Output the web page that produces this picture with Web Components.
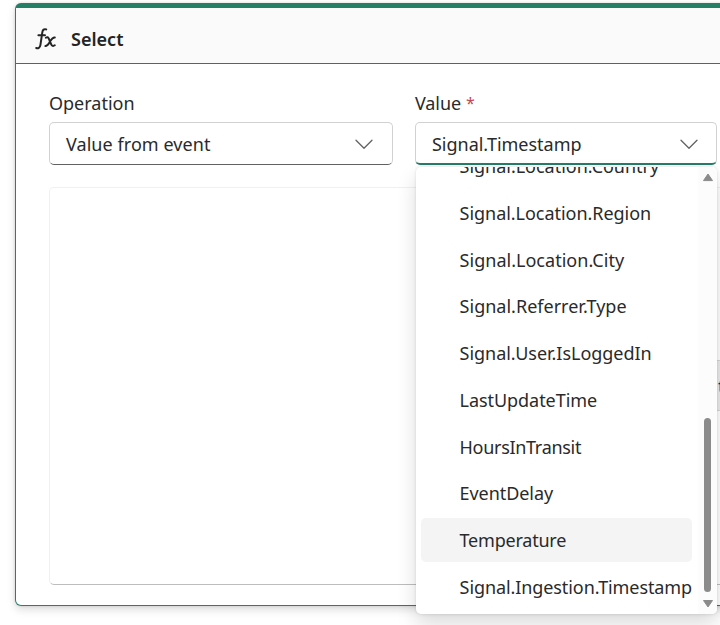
<!DOCTYPE html>
<html lang="en">
<head>
<meta charset="utf-8">
<title>Select</title>
<style>
html, body { margin: 0; height: 100%; overflow: hidden; background: #fff; }
body { font: 18px/24px "Noto Sans", "Open Sans", sans-serif; color: #2a2a2a; }
</style>
</head>
<body>
<select-card></select-card>

<script>
// A run of text whose letter-spacing is tuned so that it takes a given width.
class FitText extends HTMLElement {
  connectedCallback() {
    const root = this.attachShadow({ mode: 'open' });
    root.innerHTML = `<style>:host{display:inline-block;white-space:nowrap;flex:none}</style><slot></slot>`;
    const target = parseFloat(this.getAttribute('w'));
    const natural = this.getBoundingClientRect().width;
    this.style.letterSpacing = ((target - natural) / this.textContent.length).toFixed(3) + 'px';
  }
}

class FxIcon extends HTMLElement {
  connectedCallback() {
    this.attachShadow({ mode: 'open' }).innerHTML = `
      <style>:host{display:block;width:24px;height:24px;flex:none}svg{display:block}</style>
      <svg width="24" height="24" viewBox="0 0 24 24" fill="none" stroke="#242424" stroke-width="2" stroke-linecap="round" stroke-linejoin="round">
        <path d="M11.2 2.4C9 1.6 7.7 2.8 7.3 5.4L5.4 18.1C4.9 20.8 3.2 21.6 1.2 21M3.4 8.3H10"/>
        <path d="M10.8 10.7C12.2 9.7 13.2 10.1 13.9 11.8L16.1 17.2C16.8 19 18.2 19.4 19.8 18.3M19.8 10.4C18 10.2 16.8 11.6 15.5 13.8L14.3 15.7C13.1 17.7 12 19.2 10.4 19"/>
      </svg>`;
  }
}

class DropdownField extends HTMLElement {
  connectedCallback() {
    this.attachShadow({ mode: 'open' }).innerHTML = `
      <style>
        :host{display:flex;flex-direction:column;position:relative;flex:none}
        .label{height:24px;display:flex;gap:5px;margin-bottom:7px}
        .box{box-sizing:border-box;height:43px;border:1px solid #d1d1d1;border-bottom-color:#616161;border-radius:5px;background:#fff;
          display:flex;align-items:center;justify-content:space-between;padding:0 17px 0 16px}
        :host([open]) .box{border-bottom:2px solid #257e68;padding-right:16px;padding-top:1px}
        svg{display:block}
      </style>
      <div class="label"><slot name="label"></slot></div>
      <div class="box"><slot></slot>
        <svg width="22" height="22" viewBox="0 0 22 22" fill="none" stroke="#616161" stroke-width="1.3" stroke-linecap="round" stroke-linejoin="round"><path d="M3 7.2L11 15.2L19 7.2"/></svg>
      </div>
      <slot name="menu"></slot>`;
  }
}

class OptionMenu extends HTMLElement {
  connectedCallback() {
    this.attachShadow({ mode: 'open' }).innerHTML = `
      <style>
        :host{position:absolute;left:1px;top:76px;width:301px;height:447px;display:flex;background:#fff;border-radius:5px;
          box-shadow:0 0 3px rgba(0,0,0,.12),0 10px 20px rgba(0,0,0,.14)}
        .list{flex:1;min-width:0;display:flex;flex-direction:column;justify-content:flex-end;gap:2.75px;box-sizing:border-box;
          padding:0 6px 5.25px 5px;overflow:hidden}
        .bar{width:19px;flex:none;background:#fcfcfc;border-radius:0 5px 5px 0;display:flex;flex-direction:column;align-items:center;
          box-sizing:border-box;padding:6px 0 6px}
        .thumb{width:7px;height:174px;border-radius:4px;background:#8b8b8b;margin-top:auto;margin-bottom:8px}
        svg{display:block;flex:none}
      </style>
      <div class="list"><slot></slot></div>
      <div class="bar">
        <svg width="12" height="9" viewBox="0 0 12 9"><path d="M6 1L10.5 7.6H1.5Z" fill="#8b8b8b" stroke="#8b8b8b" stroke-linejoin="round"/></svg>
        <div class="thumb"></div>
        <svg width="12" height="8" viewBox="0 0 12 8"><path d="M6 7L10.5 .5H1.5Z" fill="#8b8b8b" stroke="#8b8b8b" stroke-linejoin="round"/></svg>
      </div>`;
  }
}

class MenuOption extends HTMLElement {
  connectedCallback() {
    this.attachShadow({ mode: 'open' }).innerHTML = `
      <style>
        :host{display:flex;align-items:center;height:44px;flex:none;box-sizing:border-box;padding-left:38.6px;border-radius:5px}
        :host([active]){background:#f4f4f4}
      </style><slot></slot>`;
  }
}

class SelectCard extends HTMLElement {
  connectedCallback() {
    this.attachShadow({ mode: 'open' }).innerHTML = `
      <style>
        :host{display:block;padding:3px 0 0 15px;width:760px;box-sizing:border-box}
        .card{box-sizing:border-box;height:603px;width:745px;border:1px solid #2a7f6a;border-top:5px solid #257e68;border-radius:6px;
          background:#fff;box-shadow:0 0 3px rgba(0,0,0,.14),0 4px 8px rgba(0,0,0,.13)}
        header{box-sizing:border-box;height:56px;background:#fafafa;border-bottom:1px solid #257e68;display:flex;align-items:center;
          gap:12px;padding:6px 0 0 19px}
        h1{margin:0;font-size:18px;line-height:24px;font-weight:600;color:#242424}
        .body{padding:27px 0 0 33px}
        .fields{display:flex;gap:22px;position:relative;z-index:1}
        .star{color:#c4455a;font-size:16px}
        .panel{box-sizing:border-box;margin-top:22px;width:720px;height:398px;border:1px solid #f0f0f0;border-bottom-color:#bdbdbd;
          border-radius:5px;display:flex;padding:172px 0 0 667px}
        .chip{box-sizing:border-box;height:51px;width:45px;background:#ebebeb;border:1px solid #d6d6d6;border-width:1px 0;padding:13px 0 0 1px}
      </style>
      <div class="card">
        <header><fx-icon></fx-icon><h1><fit-text w="52.5">Select</fit-text></h1></header>
        <div class="body">
          <div class="fields">
            <dropdown-field style="width:344px">
              <fit-text slot="label" w="85.5">Operation</fit-text>
              <fit-text w="144.5">Value from event</fit-text>
            </dropdown-field>
            <dropdown-field open style="width:302px">
              <fit-text slot="label" w="46">Value</fit-text><span slot="label" class="star">*</span>
              <fit-text w="149.5">Signal.Timestamp</fit-text>
              <option-menu slot="menu">
                <menu-option><fit-text w="199.5">Signal.Location.Country</fit-text></menu-option>
                <menu-option><fit-text w="191.5">Signal.Location.Region</fit-text></menu-option>
                <menu-option><fit-text w="164.5">Signal.Location.City</fit-text></menu-option>
                <menu-option><fit-text w="167">Signal.Referrer.Type</fit-text></menu-option>
                <menu-option><fit-text w="192">Signal.User.IsLoggedIn</fit-text></menu-option>
                <menu-option><fit-text w="137.5">LastUpdateTime</fit-text></menu-option>
                <menu-option><fit-text w="121.5">HoursInTransit</fit-text></menu-option>
                <menu-option><fit-text w="93.5">EventDelay</fit-text></menu-option>
                <menu-option active><fit-text w="106.5">Temperature</fit-text></menu-option>
                <menu-option><fit-text w="232.5">Signal.Ingestion.Timestamp</fit-text></menu-option>
              </option-menu>
            </dropdown-field>
          </div>
          <div class="panel"><div class="chip">t</div></div>
        </div>
      </div>`;
  }
}

customElements.define('fx-icon', FxIcon);
customElements.define('dropdown-field', DropdownField);
customElements.define('option-menu', OptionMenu);
customElements.define('menu-option', MenuOption);
customElements.define('select-card', SelectCard);
customElements.define('fit-text', FitText);
</script>
</body>
</html>
